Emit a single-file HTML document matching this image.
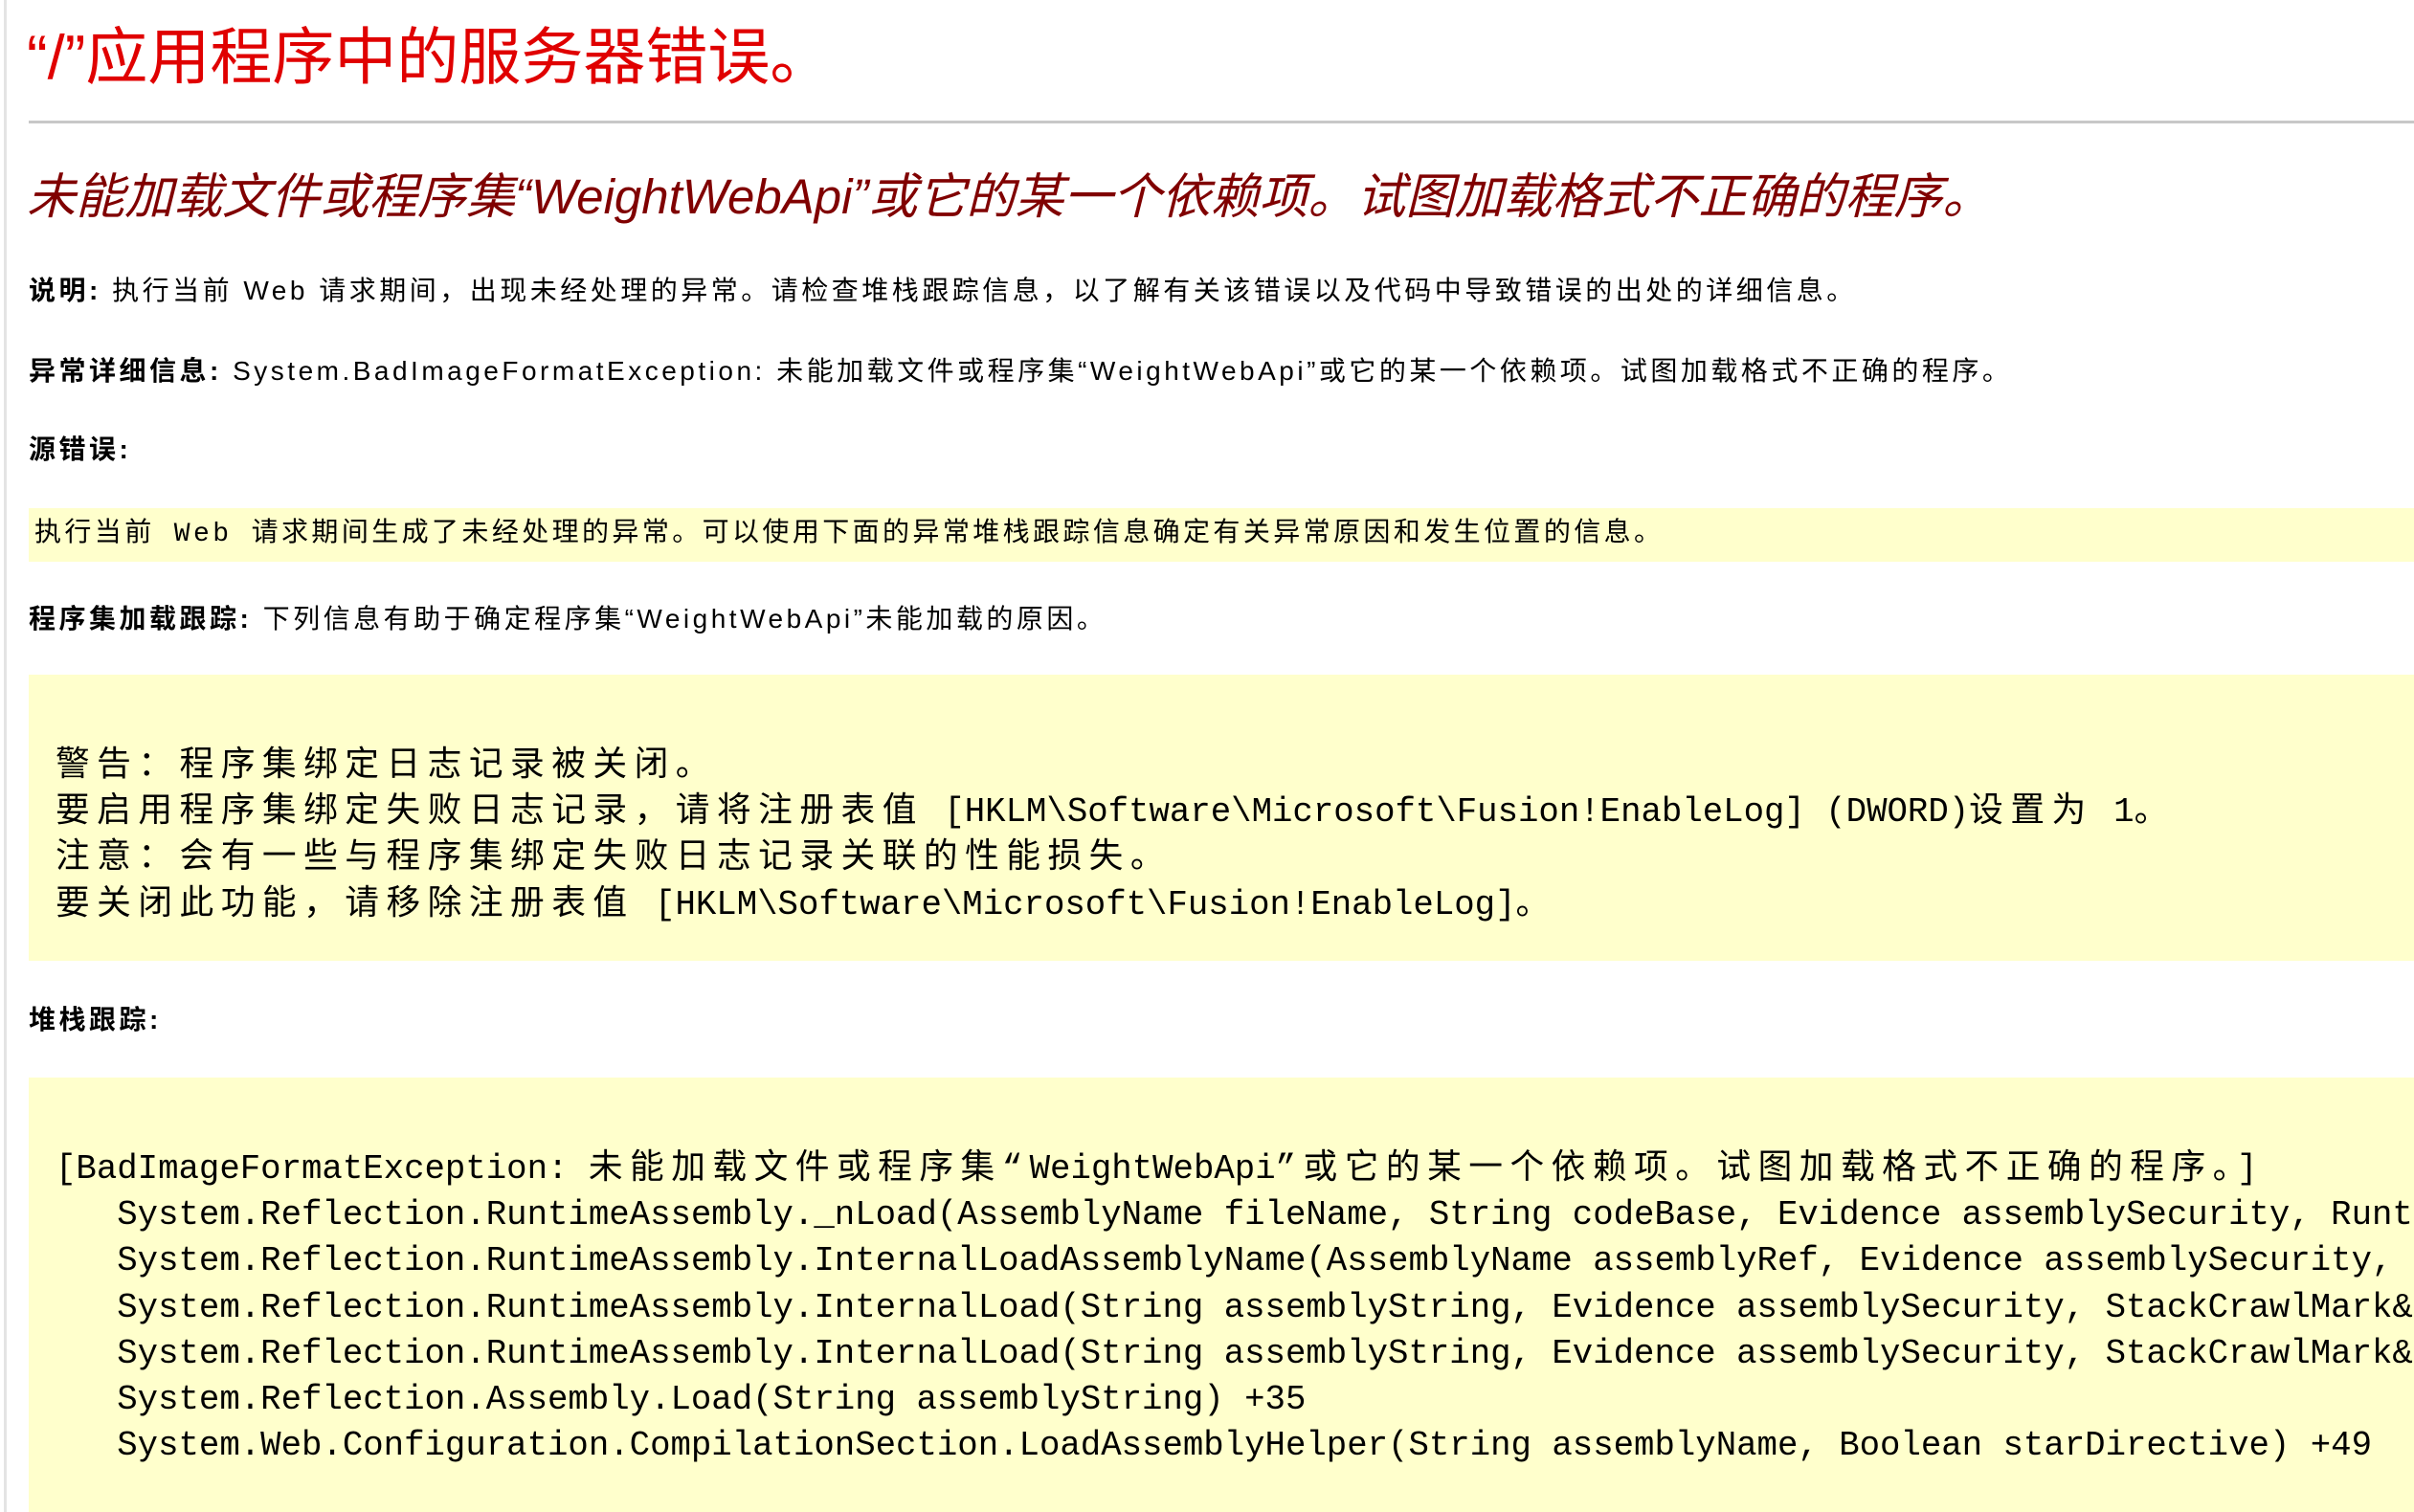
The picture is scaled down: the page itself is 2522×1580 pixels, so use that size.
<!DOCTYPE html>
<html><head><meta charset="utf-8"><style>
html,body{margin:0;padding:0;background:#fff;width:2522px;height:1580px;overflow:hidden;}
body{position:relative;font-family:"Liberation Sans","Noto Sans CJK SC",sans-serif;color:#000;}
.lb{position:absolute;top:0;width:3px;height:1580px;background:#e4e4e4;left:4px;}
.t{position:absolute;white-space:nowrap;}
h1{position:absolute;margin:0;left:28px;top:20px;font-size:65px;font-weight:normal;color:#e00000;line-height:80px;white-space:nowrap;}
.hr{position:absolute;left:30px;right:0;top:126px;height:3px;background:#c8c8c8;}
h2{position:absolute;margin:0;left:28px;top:175px;font-size:51px;font-weight:normal;font-style:italic;color:#800000;line-height:62px;white-space:nowrap;}
.p{font-size:28px;line-height:40px;left:30px;letter-spacing:3.5px;}
.p b{font-weight:bold;}
.y{position:absolute;left:30px;right:0;background:#ffffcc;overflow:hidden;}
.m{font-family:"Liberation Mono","Noto Sans CJK SC",monospace;white-space:pre;position:absolute;}
.m1{font-size:28px;line-height:40px;left:36px;letter-spacing:3.4px;}
.m2{font-size:35.7px;line-height:48.2px;left:28px;}
.c{letter-spacing:7.5px;}
</style></head><body>
<div class="lb"></div>
<h1>“/”应用程序中的服务器错误。</h1>
<div class="hr"></div>
<h2>未能加载文件或程序集“WeightWebApi”或它的某一个依赖项。试图加载格式不正确的程序。</h2>
<div class="t p" style="top:284px"><b>说明:</b> 执行当前 Web 请求期间，出现未经处理的异常。请检查堆栈跟踪信息，以了解有关该错误以及代码中导致错误的出处的详细信息。</div>
<div class="t p" style="top:368px"><b>异常详细信息:</b> System.BadImageFormatException: 未能加载文件或程序集“WeightWebApi”或它的某一个依赖项。试图加载格式不正确的程序。</div>
<div class="t p" style="top:450px"><b>源错误:</b></div>
<div class="y" style="top:531px;height:56px;"><div class="m m1" style="left:6px;top:8px;">执行当前 Web 请求期间生成了未经处理的异常。可以使用下面的异常堆栈跟踪信息确定有关异常原因和发生位置的信息。</div></div>
<div class="t p" style="top:627px"><b>程序集加载跟踪:</b> 下列信息有助于确定程序集“WeightWebApi”未能加载的原因。</div>
<div class="y" style="top:705px;height:299px;"><div class="m m2" style="top:72px"><span class="c">警告：程序集绑定日志记录被关闭。</span>
<span class="c">要启用程序集绑定失败日志记录，请将注册表值</span> [HKLM\Software\Microsoft\Fusion!EnableLog] (DWORD)<span class="c">设置为</span> 1<span class="c">。</span>
<span class="c">注意：会有一些与程序集绑定失败日志记录关联的性能损失。</span>
<span class="c">要关闭此功能，请移除注册表值</span> [HKLM\Software\Microsoft\Fusion!EnableLog]<span class="c">。</span></div></div>
<div class="t p" style="top:1046px"><b>堆栈跟踪:</b></div>
<div class="y" style="top:1126px;height:454px;"><div class="m m2" style="top:72px">[BadImageFormatException: <span class="c">未能加载文件或程序集“</span>WeightWebApi<span class="c">”或它的某一个依赖项。试图加载格式不正确的程序。</span>]
   System.Reflection.RuntimeAssembly._nLoad(AssemblyName fileName, String codeBase, Evidence assemblySecurity, RuntimeAssembly locationHint
   System.Reflection.RuntimeAssembly.InternalLoadAssemblyName(AssemblyName assemblyRef, Evidence assemblySecurity, RuntimeAssembly
   System.Reflection.RuntimeAssembly.InternalLoad(String assemblyString, Evidence assemblySecurity, StackCrawlMark&amp; stackMark
   System.Reflection.RuntimeAssembly.InternalLoad(String assemblyString, Evidence assemblySecurity, StackCrawlMark&amp; stackMark
   System.Reflection.Assembly.Load(String assemblyString) +35
   System.Web.Configuration.CompilationSection.LoadAssemblyHelper(String assemblyName, Boolean starDirective) +49</div></div>
</body></html>
